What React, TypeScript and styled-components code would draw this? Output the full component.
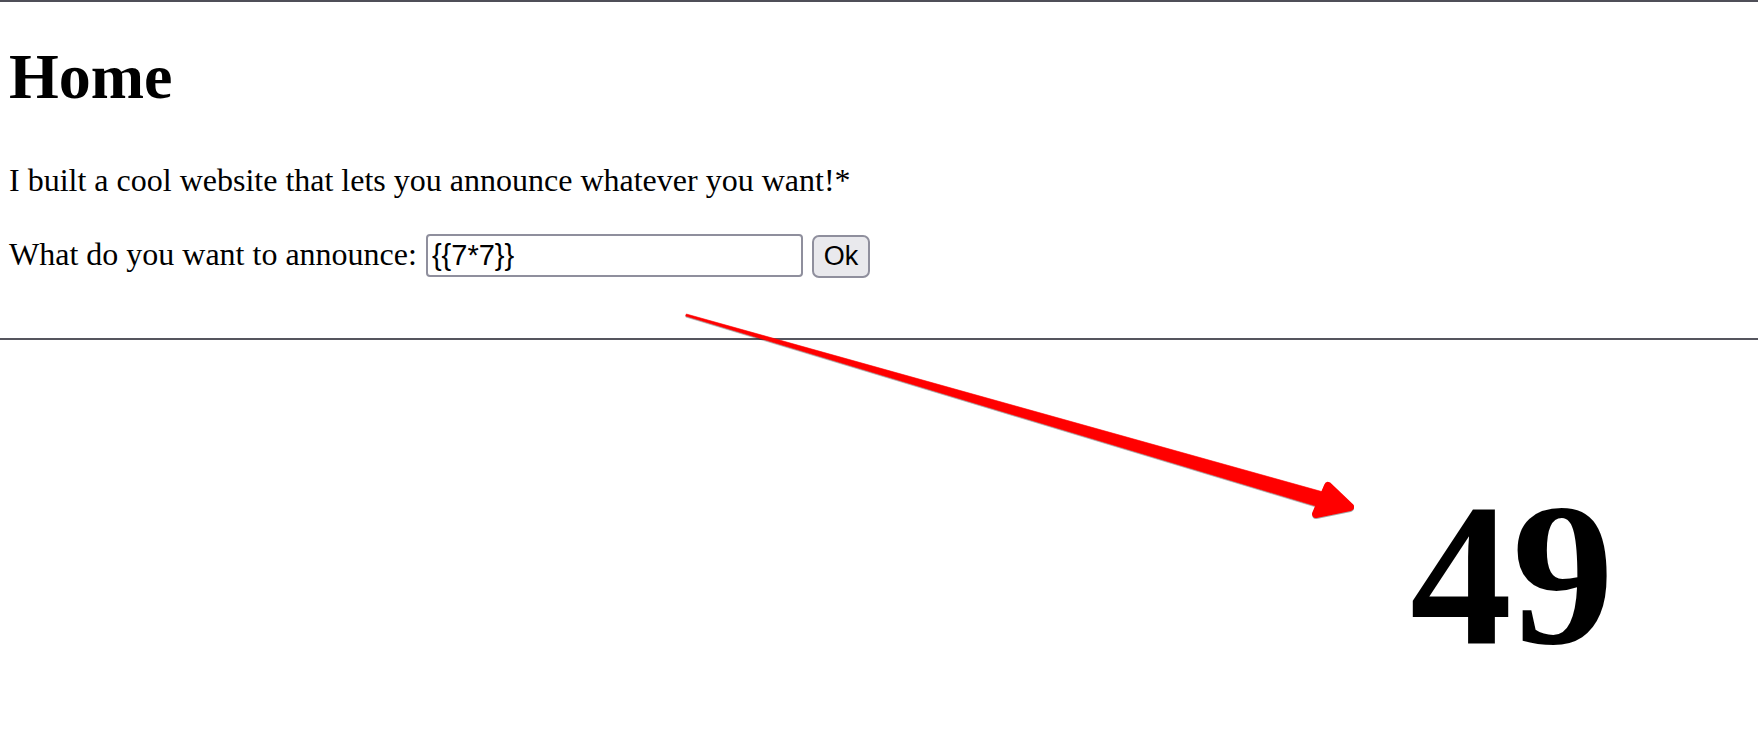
import styled, { createGlobalStyle } from "styled-components";

const GlobalStyle = createGlobalStyle`
  html, body {
    margin: 0;
    padding: 0;
    background: #fff;
  }
  body {
    font-family: "Liberation Serif", "Times New Roman", serif;
    color: #000;
  }
`;

export default function App() {
  return (
    <Page>
      <GlobalStyle />
      <Section>
        <Title>Home</Title>
        <Intro>I built a cool website that lets you announce whatever you want!*</Intro>
        <AnnounceForm onSubmit={(e) => e.preventDefault()}>
          <Label htmlFor="announce">What do you want to announce:</Label>
          <Input id="announce" defaultValue="{{7*7}}" />
          <OkButton type="submit">Ok</OkButton>
        </AnnounceForm>
      </Section>
      <Rule />
      <Result>49</Result>
      <Overlay viewBox="0 0 1758 744" aria-hidden>
        <g fill="#ff0000" stroke="#ff0000" style={{ filter: "drop-shadow(0 1px 0.6px rgba(0,0,0,0.35))" }}>
          <polygon
            points="686.3,312 685.7,314 1337.8,510.7 1342.2,495.3"
            strokeWidth="0.6"
            strokeLinejoin="round"
          />
          <polygon
            points="1328,484 1350,505 1316,512"
            strokeWidth="8"
            strokeLinejoin="round"
            strokeLinecap="round"
          />
        </g>
      </Overlay>
    </Page>
  );
}

const Page = styled.main`
  position: relative;
  width: 1758px;
  height: 744px;
  overflow: hidden;
  border-top: 2px solid #4f4f58;
  box-sizing: border-box;
`;

const Section = styled.section`
  padding: 38px 0 0 9px;
`;

const Title = styled.h1`
  margin: 0;
  font-size: 64px;
  line-height: 74px;
  font-weight: 700;
`;

const Intro = styled.p`
  margin: 48px 0 0;
  font-size: 32px;
  line-height: 37px;
`;

const AnnounceForm = styled.form`
  display: flex;
  align-items: baseline;
  gap: 9px;
  margin-top: 35px;
`;

const Label = styled.label`
  font-size: 32px;
  line-height: 37px;
`;

const Input = styled.input`
  box-sizing: border-box;
  width: 377px;
  height: 43px;
  padding: 0 4px;
  border: 2px solid #8f8f9d;
  border-radius: 4px;
  font-family: "Liberation Sans", Arial, sans-serif;
  font-size: 29px;
  color: #000;
  background: #fff;
  outline: none;
`;

const OkButton = styled.button`
  box-sizing: border-box;
  width: 58px;
  height: 43px;
  padding: 0;
  border: 2px solid #8f8f9d;
  border-radius: 7px;
  background: #e9e9ed;
  font-family: "Liberation Sans", Arial, sans-serif;
  font-size: 27px;
  color: #000;
`;

const Rule = styled.hr`
  margin: 60px 0 0;
  border: 0;
  height: 2px;
  background: #55555e;
`;

const Result = styled.div`
  margin-top: 120px;
  padding-right: 144px;
  text-align: right;
  font-size: 204px;
  line-height: 228px;
  font-weight: 700;
`;

const Overlay = styled.svg`
  position: absolute;
  top: 0;
  left: 0;
  width: 1758px;
  height: 744px;
  pointer-events: none;
`;
